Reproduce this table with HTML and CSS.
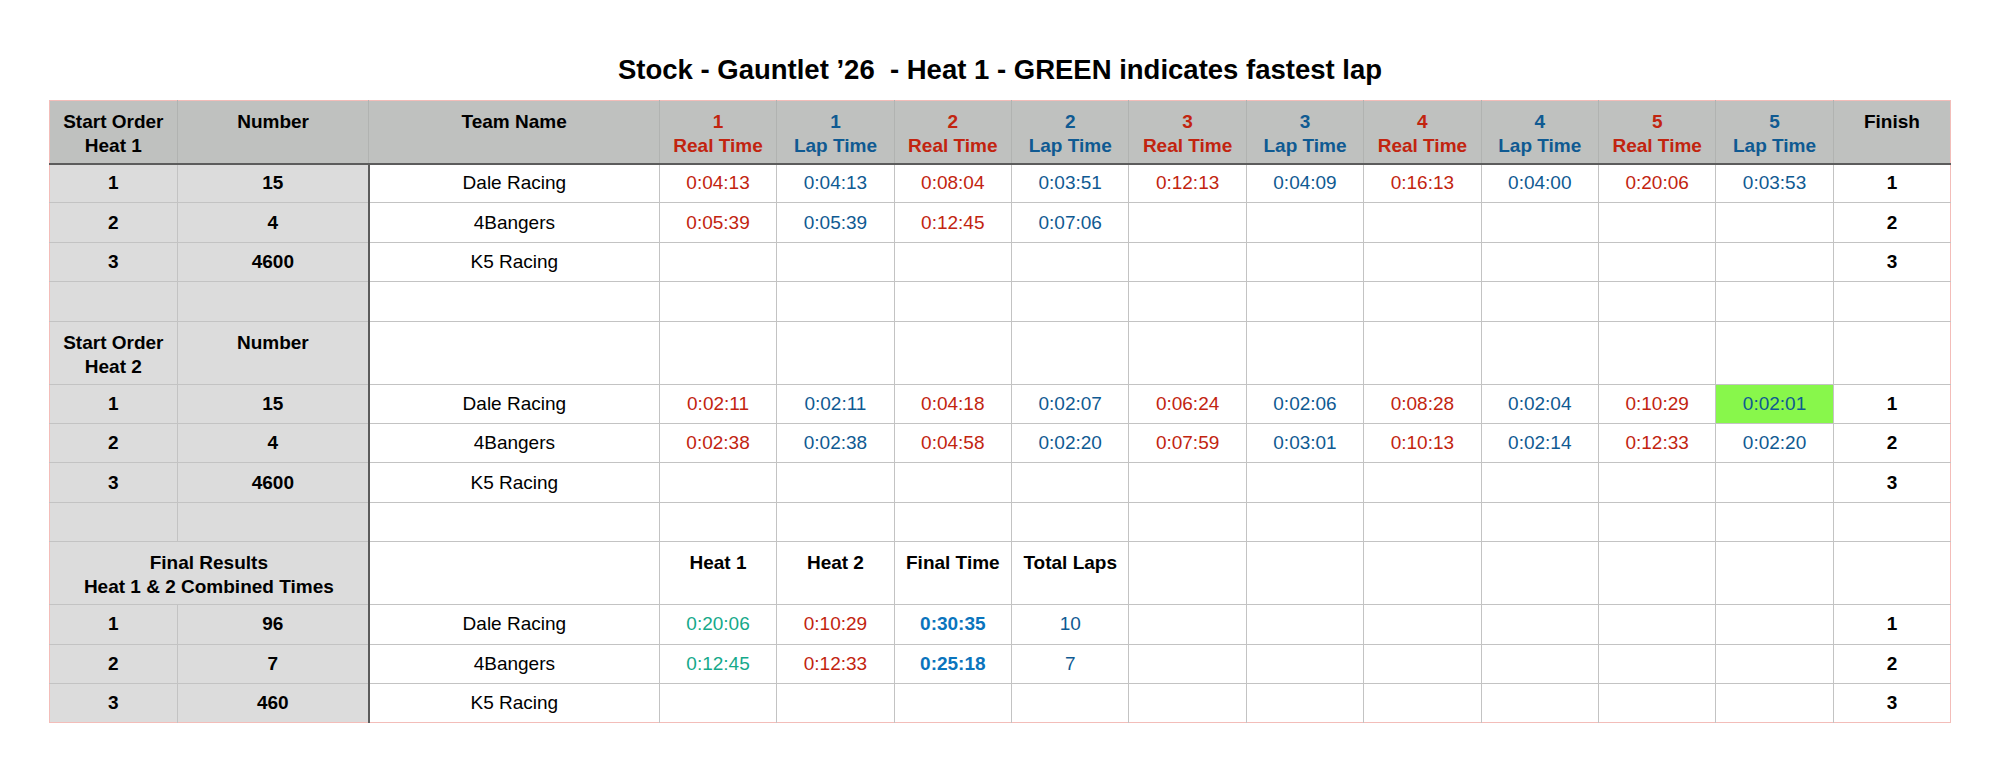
FILE: index.html
```html
<!DOCTYPE html>
<html lang="en">
<head>
<meta charset="utf-8">
<title>Stock - Gauntlet ’26 - Heat 1</title>
<link rel="stylesheet" href="styles.css">
</head>
<body>
<h1 class="title">Stock - Gauntlet ’26 &nbsp;- Heat 1 - GREEN indicates fastest lap</h1>
<table class="sheet">
  <colgroup>
    <col class="c-order"><col class="c-number"><col class="c-team">
    <col class="c-time"><col class="c-time"><col class="c-time"><col class="c-time"><col class="c-time">
    <col class="c-time"><col class="c-time"><col class="c-time"><col class="c-time"><col class="c-time">
    <col class="c-time">
  </colgroup>
  <thead>
    <tr class="tall">
      <th>Start Order<br>Heat 1</th>
      <th>Number</th>
      <th>Team Name</th>
      <th class="red">1<br>Real Time</th>
      <th class="blue">1<br>Lap Time</th>
      <th class="red">2<br>Real Time</th>
      <th class="blue">2<br>Lap Time</th>
      <th class="red">3<br>Real Time</th>
      <th class="blue">3<br>Lap Time</th>
      <th class="red">4<br>Real Time</th>
      <th class="blue">4<br>Lap Time</th>
      <th class="red">5<br>Real Time</th>
      <th class="blue">5<br>Lap Time</th>
      <th>Finish</th>
    </tr>
  </thead>
  <tbody>
    <tr class="row">
      <td class="side">1</td><td class="side num">15</td><td>Dale Racing</td>
      <td class="red">0:04:13</td><td class="blue">0:04:13</td><td class="red">0:08:04</td><td class="blue">0:03:51</td>
      <td class="red">0:12:13</td><td class="blue">0:04:09</td><td class="red">0:16:13</td><td class="blue">0:04:00</td>
      <td class="red">0:20:06</td><td class="blue">0:03:53</td><td class="bold">1</td>
    </tr>
    <tr class="row">
      <td class="side">2</td><td class="side num">4</td><td>4Bangers</td>
      <td class="red">0:05:39</td><td class="blue">0:05:39</td><td class="red">0:12:45</td><td class="blue">0:07:06</td>
      <td></td><td></td><td></td><td></td><td></td><td></td><td class="bold">2</td>
    </tr>
    <tr class="row">
      <td class="side">3</td><td class="side num">4600</td><td>K5 Racing</td>
      <td></td><td></td><td></td><td></td><td></td><td></td><td></td><td></td><td></td><td></td><td class="bold">3</td>
    </tr>
    <tr class="row">
      <td class="side"></td><td class="side num"></td><td></td>
      <td></td><td></td><td></td><td></td><td></td><td></td><td></td><td></td><td></td><td></td><td></td>
    </tr>
    <tr class="tall">
      <td class="side head">Start Order<br>Heat 2</td><td class="side num head">Number</td><td></td>
      <td></td><td></td><td></td><td></td><td></td><td></td><td></td><td></td><td></td><td></td><td></td>
    </tr>
    <tr class="row">
      <td class="side">1</td><td class="side num">15</td><td>Dale Racing</td>
      <td class="red">0:02:11</td><td class="blue">0:02:11</td><td class="red">0:04:18</td><td class="blue">0:02:07</td>
      <td class="red">0:06:24</td><td class="blue">0:02:06</td><td class="red">0:08:28</td><td class="blue">0:02:04</td>
      <td class="red">0:10:29</td><td class="blue fastest">0:02:01</td><td class="bold">1</td>
    </tr>
    <tr class="row">
      <td class="side">2</td><td class="side num">4</td><td>4Bangers</td>
      <td class="red">0:02:38</td><td class="blue">0:02:38</td><td class="red">0:04:58</td><td class="blue">0:02:20</td>
      <td class="red">0:07:59</td><td class="blue">0:03:01</td><td class="red">0:10:13</td><td class="blue">0:02:14</td>
      <td class="red">0:12:33</td><td class="blue">0:02:20</td><td class="bold">2</td>
    </tr>
    <tr class="row">
      <td class="side">3</td><td class="side num">4600</td><td>K5 Racing</td>
      <td></td><td></td><td></td><td></td><td></td><td></td><td></td><td></td><td></td><td></td><td class="bold">3</td>
    </tr>
    <tr class="row">
      <td class="side"></td><td class="side num"></td><td></td>
      <td></td><td></td><td></td><td></td><td></td><td></td><td></td><td></td><td></td><td></td><td></td>
    </tr>
    <tr class="tall">
      <td class="side num head" colspan="2">Final Results<br>Heat 1 &amp; 2 Combined Times</td><td></td>
      <td class="head">Heat 1</td><td class="head">Heat 2</td><td class="head">Final Time</td><td class="head">Total Laps</td>
      <td></td><td></td><td></td><td></td><td></td><td></td><td></td>
    </tr>
    <tr class="row">
      <td class="side">1</td><td class="side num">96</td><td>Dale Racing</td>
      <td class="teal">0:20:06</td><td class="red">0:10:29</td><td class="total">0:30:35</td><td class="blue">10</td>
      <td></td><td></td><td></td><td></td><td></td><td></td><td class="bold">1</td>
    </tr>
    <tr class="row">
      <td class="side">2</td><td class="side num">7</td><td>4Bangers</td>
      <td class="teal">0:12:45</td><td class="red">0:12:33</td><td class="total">0:25:18</td><td class="blue">7</td>
      <td></td><td></td><td></td><td></td><td></td><td></td><td class="bold">2</td>
    </tr>
    <tr class="row">
      <td class="side">3</td><td class="side num">460</td><td>K5 Racing</td>
      <td></td><td></td><td></td><td></td><td></td><td></td><td></td><td></td><td></td><td></td><td class="bold">3</td>
    </tr>
  </tbody>
</table>
</body>
</html>
```

FILE: styles.css
```css
html, body {
  margin: 0;
  padding: 0;
  background: #ffffff;
}

body {
  font-family: "Liberation Sans", Arial, Helvetica, sans-serif;
  color: #000000;
}

.title {
  margin: 54px 0 14px;
  font-size: 27.5px;
  line-height: 32px;
  font-weight: bold;
  text-align: center;
}

.sheet {
  width: 1901px;
  margin: 0 auto;
  table-layout: fixed;
  border-collapse: collapse;
  border: 1px solid #f3bdb9;
  font-size: 19px;
  line-height: 24px;
}

.c-order { width: 128px; }
.c-number { width: 191.5px; }
.c-team { width: 290.5px; }
.c-time { width: 117.4px; }

.sheet th,
.sheet td {
  padding: 0 2px;
  text-align: center;
  border-right: 1px solid #c3c3c3;
  border-bottom: 1px solid #c3c3c3;
  white-space: nowrap;
}

.sheet th:last-child,
.sheet td:last-child {
  border-right: none;
}

.sheet tbody tr:last-child td {
  border-bottom: none;
}

.sheet th {
  background: #bfc1bf;
  font-weight: bold;
  vertical-align: top;
  padding-top: 9px;
  border-right-color: #b1b3b1;
  border-bottom: 2px solid #5c5c5c;
}

.tall { height: 63px; }
.row { height: 39.4px; }

.sheet td {
  vertical-align: middle;
}

.sheet td.head {
  vertical-align: top;
  padding-top: 9px;
  font-weight: bold;
}

.side {
  background: #dcdcdc;
  font-weight: bold;
}

.sheet td.num {
  border-right: 2px solid #5c5c5c;
}

.bold { font-weight: bold; }

.red { color: #c2240f; }
.blue { color: #0f5a92; }
.teal { color: #14a98a; }

.total {
  color: #0a74bd;
  font-weight: bold;
}

.fastest { background: #88f74b; }
```
